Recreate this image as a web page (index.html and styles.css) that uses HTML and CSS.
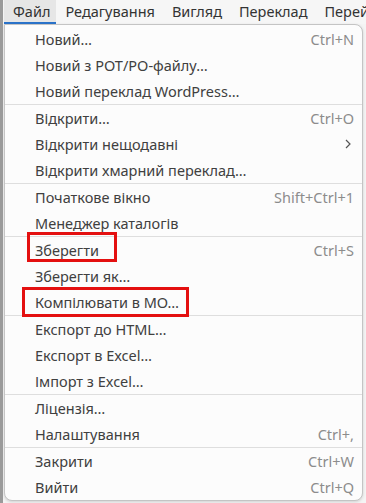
FILE: index.html
```html
<!DOCTYPE html>
<html>
  <head>
    <title>Файл</title>
    <link rel="stylesheet" href="styles.css">
  </head>
  <body>
    <div class="menubar">
      <div class="menubar-item active">Файл</div>
      <div class="menubar-item">Редагування</div>
      <div class="menubar-item">Вигляд</div>
      <div class="menubar-item">Переклад</div>
      <div class="menubar-item">Перейти</div>
    </div>

    <div class="menu">
      <div class="item"><span>Новий…</span><span class="key">Ctrl+N</span></div>
      <div class="item"><span>Новий з POT/PO-файлу…</span></div>
      <div class="item"><span>Новий переклад WordPress…</span></div>
      <div class="sep"></div>
      <div class="item"><span>Відкрити…</span><span class="key">Ctrl+O</span></div>
      <div class="item">
        <span>Відкрити нещодавні</span>
        <svg class="arrow" width="8" height="12" viewBox="0 0 8 12">
          <path d="M2 2 L6 6 L2 10" fill="none" stroke="#555" stroke-width="1.2"/>
        </svg>
      </div>
      <div class="item"><span>Відкрити хмарний переклад…</span></div>
      <div class="sep"></div>
      <div class="item"><span>Початкове вікно</span><span class="key">Shift+Ctrl+1</span></div>
      <div class="item"><span>Менеджер каталогів</span></div>
      <div class="sep"></div>
      <div class="item"><span>Зберегти</span><span class="key">Ctrl+S</span></div>
      <div class="item"><span>Зберегти як…</span></div>
      <div class="item"><span>Компілювати в MO…</span></div>
      <div class="sep"></div>
      <div class="item"><span>Експорт до HTML…</span></div>
      <div class="item"><span>Експорт в Excel…</span></div>
      <div class="item"><span>Імпорт з Excel…</span></div>
      <div class="sep"></div>
      <div class="item"><span>Ліцензія…</span></div>
      <div class="item"><span>Налаштування</span><span class="key">Ctrl+,</span></div>
      <div class="sep"></div>
      <div class="item"><span>Закрити</span><span class="key">Ctrl+W</span></div>
      <div class="item"><span>Вийти</span><span class="key">Ctrl+Q</span></div>
    </div>

    <!-- annotation boxes drawn over the menu -->
    <div class="mark mark-save"></div>
    <div class="mark mark-compile"></div>
  </body>
</html>
```

FILE: styles.css
```css
body {
  margin: 0;
  background-color: #f4f4f4;
  color: #404040;
  font-family: "Noto Sans", "DejaVu Sans", sans-serif;
  font-size: 14.5px;
  height: 503px;
  overflow: hidden;
  position: relative;
  border-left: 3px solid #9a9a9a;
  box-sizing: border-box;
}

.menubar {
  display: flex;
  height: 24px;
  background-color: #f6f6f6;
  white-space: nowrap;
  margin-left: 1px;
  overflow: hidden;
}

.menubar-item {
  padding: 0 8px 0 9px;
  line-height: 23px;
  font-size: 14.5px;
  color: #333333;
}

.menubar-item.active {
  background-color: #e6e6e6;
  border-bottom: 2px solid #2a72c8;
  line-height: 22px;
  padding: 0 6px 0 9px;
}

.menu {
  margin-left: 1px;
  width: 359px;
  box-sizing: border-box;
  background-color: #fcfcfc;
  border: 1px solid #c4c4c4;
  border-radius: 0 8px 8px 8px;
  padding: 1px 0 0 0;
  box-shadow: 0 1px 3px rgba(0, 0, 0, 0.15);
}

.item {
  display: flex;
  justify-content: space-between;
  align-items: center;
  height: 26px;
  padding: 0 8px 0 30px;
}

.key {
  color: #8c8c8c;
}

.arrow {
  margin-right: 2px;
}

.sep {
  height: 1px;
  background-color: #dedede;
}

.mark {
  position: absolute;
  border: 3px solid #e41010;
  box-sizing: border-box;
}

.mark-save {
  left: 24px;
  top: 232px;
  width: 90px;
  height: 30px;
}

.mark-compile {
  left: 19px;
  top: 287px;
  width: 167px;
  height: 30px;
}
```
